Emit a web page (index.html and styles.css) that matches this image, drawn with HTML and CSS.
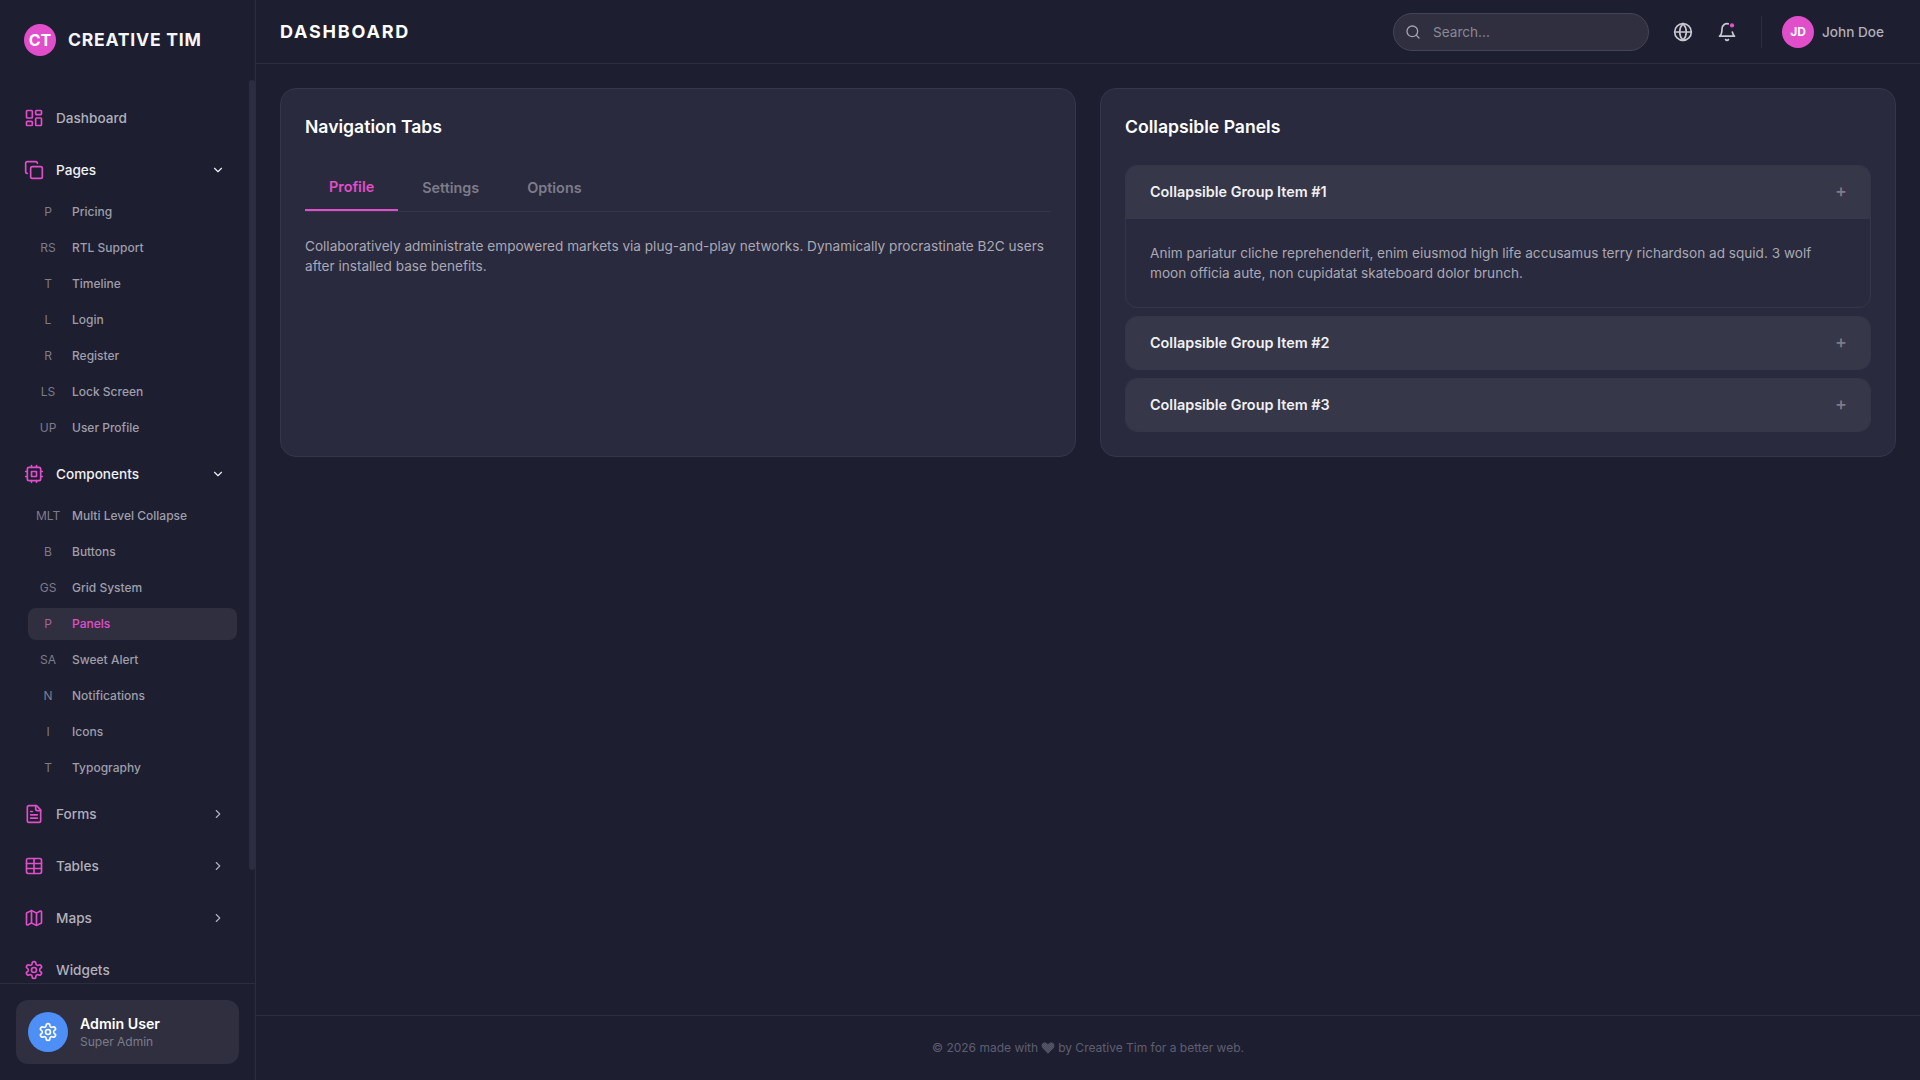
FILE: index.html
```html
<!DOCTYPE html>
<html lang="en">
<head>
<meta charset="utf-8">
<title>Creative Tim Dashboard</title>
<link rel="stylesheet" href="styles.css">
</head>
<body>
<svg class="defs" width="0" height="0" aria-hidden="true">
  <defs>
    <pattern id="dither" width="2" height="2" patternUnits="userSpaceOnUse" patternTransform="scale(1.7)"><rect width="2" height="2" fill="#47475a"/><rect width="1" height="1" fill="#5a5a6c"/><rect x="1" y="1" width="1" height="1" fill="#5a5a6c"/></pattern>
    <g id="i-dashboard"><rect x="3" y="3" width="7" height="9" rx="1"/><rect x="14" y="3" width="7" height="5" rx="1"/><rect x="14" y="12" width="7" height="9" rx="1"/><rect x="3" y="16" width="7" height="5" rx="1"/></g>
    <g id="i-copy"><rect x="8" y="8" width="14" height="14" rx="2"/><path d="M4 16c-1.1 0-2-.9-2-2V4c0-1.1.9-2 2-2h10c1.1 0 2 .9 2 2"/></g>
    <g id="i-cpu"><rect x="4" y="4" width="16" height="16" rx="2"/><rect x="9" y="9" width="6" height="6"/><path d="M15 2v2M15 20v2M2 15h2M2 9h2M20 15h2M20 9h2M9 2v2M9 20v2"/></g>
    <g id="i-file"><path d="M15 2H6a2 2 0 0 0-2 2v16a2 2 0 0 0 2 2h12a2 2 0 0 0 2-2V7Z"/><path d="M14 2v4a2 2 0 0 0 2 2h4"/><path d="M10 9H8M16 13H8M16 17H8"/></g>
    <g id="i-table"><rect x="3" y="3" width="18" height="18" rx="2"/><path d="M12 3v18M3 9h18M3 15h18"/></g>
    <g id="i-map"><path d="M14.106 5.553a2 2 0 0 0 1.788 0l3.659-1.83A1 1 0 0 1 21 4.619v12.764a1 1 0 0 1-.553.894l-4.553 2.277a2 2 0 0 1-1.788 0l-4.212-2.106a2 2 0 0 0-1.788 0l-3.659 1.83A1 1 0 0 1 3 19.381V6.618a1 1 0 0 1 .553-.894l4.553-2.277a2 2 0 0 1 1.788 0z"/><path d="M15 5.764v15M9 3.236v15"/></g>
    <g id="i-gear"><path d="M12.22 2h-.44a2 2 0 0 0-2 2v.18a2 2 0 0 1-1 1.73l-.43.25a2 2 0 0 1-2 0l-.15-.08a2 2 0 0 0-2.73.73l-.22.38a2 2 0 0 0 .73 2.73l.15.1a2 2 0 0 1 1 1.72v.51a2 2 0 0 1-1 1.74l-.15.09a2 2 0 0 0-.73 2.73l.22.38a2 2 0 0 0 2.73.73l.15-.08a2 2 0 0 1 2 0l.43.25a2 2 0 0 1 1 1.73V20a2 2 0 0 0 2 2h.44a2 2 0 0 0 2-2v-.18a2 2 0 0 1 1-1.73l.43-.25a2 2 0 0 1 2 0l.15.08a2 2 0 0 0 2.73-.73l.22-.39a2 2 0 0 0-.73-2.73l-.15-.08a2 2 0 0 1-1-1.74v-.5a2 2 0 0 1 1-1.74l.15-.09a2 2 0 0 0 .73-2.73l-.22-.38a2 2 0 0 0-2.73-.73l-.15.08a2 2 0 0 1-2 0l-.43-.25a2 2 0 0 1-1-1.73V4a2 2 0 0 0-2-2z"/><circle cx="12" cy="12" r="3"/></g>
    <g id="i-down"><path d="m6 9 6 6 6-6"/></g>
    <g id="i-right"><path d="m9 18 6-6-6-6"/></g>
  </defs>
</svg>
<div class="app">
  <aside class="sidebar">
    <div class="brand"><span class="brand-mark">CT</span><span class="brand-name">CREATIVE TIM</span></div>
    <nav class="nav">
      <a class="nav-item"><svg class="ico" viewBox="0 0 24 24"><use href="#i-dashboard"/></svg><span class="nav-label">Dashboard</span></a>
      <a class="nav-item is-open"><svg class="ico" viewBox="0 0 24 24"><use href="#i-copy"/></svg><span class="nav-label">Pages</span><svg class="chev" viewBox="0 0 24 24"><use href="#i-down"/></svg></a>
      <ul class="sub">
        <li class="sub-item"><span class="sub-abbr">P</span><span>Pricing</span></li>
        <li class="sub-item"><span class="sub-abbr">RS</span><span>RTL Support</span></li>
        <li class="sub-item"><span class="sub-abbr">T</span><span>Timeline</span></li>
        <li class="sub-item"><span class="sub-abbr">L</span><span>Login</span></li>
        <li class="sub-item"><span class="sub-abbr">R</span><span>Register</span></li>
        <li class="sub-item"><span class="sub-abbr">LS</span><span>Lock Screen</span></li>
        <li class="sub-item"><span class="sub-abbr">UP</span><span>User Profile</span></li>
      </ul>
      <a class="nav-item is-open"><svg class="ico" viewBox="0 0 24 24"><use href="#i-cpu"/></svg><span class="nav-label">Components</span><svg class="chev" viewBox="0 0 24 24"><use href="#i-down"/></svg></a>
      <ul class="sub">
        <li class="sub-item"><span class="sub-abbr">MLT</span><span>Multi Level Collapse</span></li>
        <li class="sub-item"><span class="sub-abbr">B</span><span>Buttons</span></li>
        <li class="sub-item"><span class="sub-abbr">GS</span><span>Grid System</span></li>
        <li class="sub-item is-active"><span class="sub-abbr">P</span><span>Panels</span></li>
        <li class="sub-item"><span class="sub-abbr">SA</span><span>Sweet Alert</span></li>
        <li class="sub-item"><span class="sub-abbr">N</span><span>Notifications</span></li>
        <li class="sub-item"><span class="sub-abbr">I</span><span>Icons</span></li>
        <li class="sub-item"><span class="sub-abbr">T</span><span>Typography</span></li>
      </ul>
      <a class="nav-item"><svg class="ico" viewBox="0 0 24 24"><use href="#i-file"/></svg><span class="nav-label">Forms</span><svg class="chev" viewBox="0 0 24 24"><use href="#i-right"/></svg></a>
      <a class="nav-item"><svg class="ico" viewBox="0 0 24 24"><use href="#i-table"/></svg><span class="nav-label">Tables</span><svg class="chev" viewBox="0 0 24 24"><use href="#i-right"/></svg></a>
      <a class="nav-item"><svg class="ico" viewBox="0 0 24 24"><use href="#i-map"/></svg><span class="nav-label">Maps</span><svg class="chev" viewBox="0 0 24 24"><use href="#i-right"/></svg></a>
      <a class="nav-item"><svg class="ico" viewBox="0 0 24 24"><use href="#i-gear"/></svg><span class="nav-label">Widgets</span></a>
    </nav>
    <span class="scroll-thumb"></span>
    <div class="side-foot">
      <div class="admin">
        <span class="admin-avatar"><svg class="admin-ico" viewBox="0 0 24 24"><use href="#i-gear"/></svg></span>
        <div class="admin-text"><div class="admin-name">Admin User</div><div class="admin-role">Super Admin</div></div>
      </div>
    </div>
  </aside>
  <div class="main">
    <header class="topbar">
      <h1 class="page-title">DASHBOARD</h1>
      <div class="top-actions">
        <label class="search">
          <svg class="search-ico" viewBox="0 0 24 24"><circle cx="11" cy="11" r="8"/><path d="m21 21-4.3-4.3"/></svg>
          <input class="search-input" type="text" placeholder="Search...">
        </label>
        <button class="icon-btn"><svg class="top-ico" viewBox="0 0 24 24"><circle cx="12" cy="12" r="10"/><path d="M12 2a14.5 14.5 0 0 0 0 20 14.5 14.5 0 0 0 0-20"/><path d="M2 12h20"/></svg></button>
        <button class="icon-btn"><svg class="top-ico" viewBox="0 0 24 24"><path d="M10.3 21a1.94 1.94 0 0 0 3.4 0"/><path d="M13.5 2.2A6 6 0 0 0 6 8c0 7-3 9-3 9h18s-1.700-1.100-2.600-5"/><circle class="bell-dot" cx="18" cy="4" r="2.600"/></svg></button>
        <span class="divider"></span>
        <div class="user"><span class="user-avatar">JD</span><span class="user-name">John Doe</span></div>
      </div>
    </header>
    <main class="content">
      <section class="card">
        <h2 class="card-title">Navigation Tabs</h2>
        <div class="tabs">
          <span class="tab is-active">Profile</span>
          <span class="tab">Settings</span>
          <span class="tab">Options</span>
        </div>
        <p class="copy">Collaboratively administrate empowered markets via plug-and-play networks. Dynamically procrastinate B2C users after installed base benefits.</p>
      </section>
      <section class="card">
        <h2 class="card-title">Collapsible Panels</h2>
        <div class="accordion">
          <div class="acc-item">
            <div class="acc-head is-open"><span>Collapsible Group Item #1</span><span class="acc-plus">+</span></div>
            <div class="acc-body"><p class="copy">Anim pariatur cliche reprehenderit, enim eiusmod high life accusamus terry richardson ad squid. 3 wolf moon officia aute, non cupidatat skateboard dolor brunch.</p></div>
          </div>
          <div class="acc-item">
            <div class="acc-head"><span>Collapsible Group Item #2</span><span class="acc-plus">+</span></div>
          </div>
          <div class="acc-item">
            <div class="acc-head"><span>Collapsible Group Item #3</span><span class="acc-plus">+</span></div>
          </div>
        </div>
      </section>
    </main>
    <footer class="footer"><span>© 2026 made with</span><svg class="heart" viewBox="0 0 24 24"><path fill="url(#dither)" d="M12 22 2.800 12.600C.2 9.900.4 5.400 3.400 3.500 5.900 2 9.300 2.700 12 5.800c2.700-3.100 6.100-3.800 8.600-2.300 3 1.900 3.200 6.400.6 9.100z"/></svg><span>by Creative Tim for a better web.</span></footer>
  </div>
</div>
</body>
</html>
```
FILE: styles.css
```css
* { box-sizing: border-box; }
html, body { height: 100%; }
body {
  margin: 0;
  background: #1d1e30;
  color: #fff;
  font-family: Inter, "Liberation Sans", sans-serif;
  overflow: hidden;
}
.defs { position: absolute; }
.app { display: flex; height: 1080px; }

/* Sidebar */
.sidebar {
  position: relative;
  width: 256px;
  flex: none;
  display: flex;
  flex-direction: column;
  border-right: 1px solid #2c2d40;
  height: 100%;
}
.brand { height: 80px; flex: none; display: flex; align-items: center; gap: 12px; padding: 0 24px 1px; }
.brand-mark {
  width: 32px; height: 32px; border-radius: 50%;
  background: #e14eca; color: #fff;
  display: flex; align-items: center; justify-content: center;
  font-size: 16px; font-weight: 700;
}
.brand-name { font-size: 17.6px; font-weight: 700; letter-spacing: 0.75px; color: #f6f6f8; }
.nav {
  flex: 1; min-height: 0;
  overflow: hidden;
  padding: 16px 18px 16px 12px;
  display: flex; flex-direction: column; gap: 8px;
}
.scroll-thumb { position: absolute; top: 80px; right: 0; width: 6px; height: 790px; background: #2c2d40; border-radius: 3px; }
.nav-item {
  flex: none;
  height: 44px;
  display: flex; align-items: center; gap: 12px;
  padding: 0 12px 1px;
  color: #b1b0bb;
  font-size: 13.6px; font-weight: 500;
}
.nav-item.is-open { color: #f0f0f3; }
.ico { width: 20px; height: 20px; flex: none; fill: none; stroke: #e14eca; stroke-width: 2; stroke-linecap: round; stroke-linejoin: round; }
.nav-label { flex: 1; }
.chev { width: 14px; height: 14px; flex: none; fill: none; stroke: currentColor; stroke-width: 2; stroke-linecap: round; stroke-linejoin: round; }
.sub { list-style: none; margin: -4px 0 0; padding: 0 0 0 16px; display: flex; flex-direction: column; gap: 4px; flex: none; }
.sub-item {
  height: 32px; display: flex; align-items: center; gap: 12px;
  padding: 0 8px 2px; border-radius: 8px;
  color: #9f9eaa; font-size: 12px; font-weight: 500;
}
.sub-abbr { width: 24px; flex: none; text-align: center; color: #7d7c8a; font-weight: 400; }
.sub-item.is-active { background: #2f2f40; color: #e14eca; }
.sub-item.is-active .sub-abbr { color: #a3639d; }
.side-foot { flex: none; border-top: 1px solid #2c2d40; padding: 16px; }
.admin { height: 64px; border-radius: 12px; background: #2f2f40; padding: 12px; display: flex; align-items: center; gap: 12px; }
.admin-avatar { width: 40px; height: 40px; border-radius: 50%; background: #4d8ef7; display: flex; align-items: center; justify-content: center; flex: none; }
.admin-ico { width: 20px; height: 20px; fill: none; stroke: #fff; stroke-width: 2; stroke-linecap: round; stroke-linejoin: round; }
.admin-name { font-size: 14.2px; font-weight: 600; line-height: 20px; }
.admin-role { font-size: 12px; line-height: 16px; color: #7d7c8a; }

/* Top bar */
.main { flex: 1; min-width: 0; display: flex; flex-direction: column; }
.topbar {
  height: 64px; flex: none;
  border-bottom: 1px solid #2c2d40;
  display: flex; align-items: center; justify-content: space-between;
  padding: 0 24px;
}
.page-title { margin: 0; font-size: 18px; font-weight: 700; letter-spacing: 1.8px; }
.top-actions { display: flex; align-items: center; }
.search {
  width: 256px; height: 38px;
  border: 1px solid #45455a; border-radius: 19px;
  background: #2f2f40;
  display: flex; align-items: center; gap: 12px;
  padding: 0 11px;
}
.search-ico { width: 16px; height: 16px; flex: none; fill: none; stroke: #a3a2ae; stroke-width: 2; stroke-linecap: round; stroke-linejoin: round; }
.search-input { flex: 1; min-width: 0; border: 0; outline: 0; padding: 0; background: transparent; color: #fff; font: 400 13.6px Inter, sans-serif; }
.search-input::placeholder { color: #8a8996; opacity: 1; }
.icon-btn { width: 36px; height: 36px; margin-left: 8px; border: 0; padding: 0; background: transparent; display: flex; align-items: center; justify-content: center; }
.icon-btn:first-of-type { margin-left: 16px; }
.top-ico { width: 20px; height: 20px; fill: none; stroke: #c9c8d0; stroke-width: 2; stroke-linecap: round; stroke-linejoin: round; overflow: visible; }
.bell-dot { fill: #e14eca; stroke: none; }
.divider { width: 1px; height: 32px; background: #2c2d40; margin: 0 20px 0 16px; }
.user { display: flex; align-items: center; gap: 8px; padding-right: 12px; }
.user-avatar { width: 32px; height: 32px; border-radius: 50%; background: #e14eca; display: flex; align-items: center; justify-content: center; font-size: 12px; font-weight: 700; }
.user-name { font-size: 13.6px; font-weight: 500; color: #b1b0bb; }

/* Content */
.content { flex: 1; min-height: 0; padding: 24px; display: grid; grid-template-columns: 1fr 1fr; gap: 24px; align-items: start; }
.card {
  align-self: start;
  height: 100%;
  max-height: 369px;
  background: #292a3d;
  border: 1px solid #35364a;
  border-radius: 16px;
  padding: 24px;
}
.card-title { margin: 0 0 24px; font-size: 17.6px; font-weight: 600; line-height: 28px; }
.tabs { display: flex; border-bottom: 1px solid #35364a; margin-bottom: 24px; height: 47px; }
.tab { height: 46px; padding: 0 24px 2px; display: flex; align-items: center; font-size: 14.4px; font-weight: 600; color: #7d7c8a; }
.tab.is-active { color: #e14eca; border-bottom: 2px solid #e14eca; }
.copy { margin: 0; font-size: 13.6px; line-height: 20px; color: #a9a8b4; }
.accordion { display: flex; flex-direction: column; gap: 8px; }
.acc-item { border: 1px solid #35364a; border-radius: 12px; overflow: hidden; }
.acc-head {
  height: 52px; padding: 0 24px 2px; background: #363748;
  display: flex; align-items: center; justify-content: space-between;
  font-size: 14.4px; font-weight: 600; color: #f0f0f3;
}
.acc-head.is-open { height: 53px; padding-bottom: 3px; }
.acc-plus { color: #7d7c8a; font-weight: 500; font-size: 18px; line-height: 20px; margin-right: -1px; }
.acc-body { padding: 24px; }

/* Footer */
.footer {
  height: 65px; flex: none;
  border-top: 1px solid #2c2d40;
  display: flex; align-items: center; justify-content: center; gap: 3px;
  padding-bottom: 1px;
  font-size: 12px; color: #5f5e70;
}
.heart { width: 14px; height: 14px; }
```
